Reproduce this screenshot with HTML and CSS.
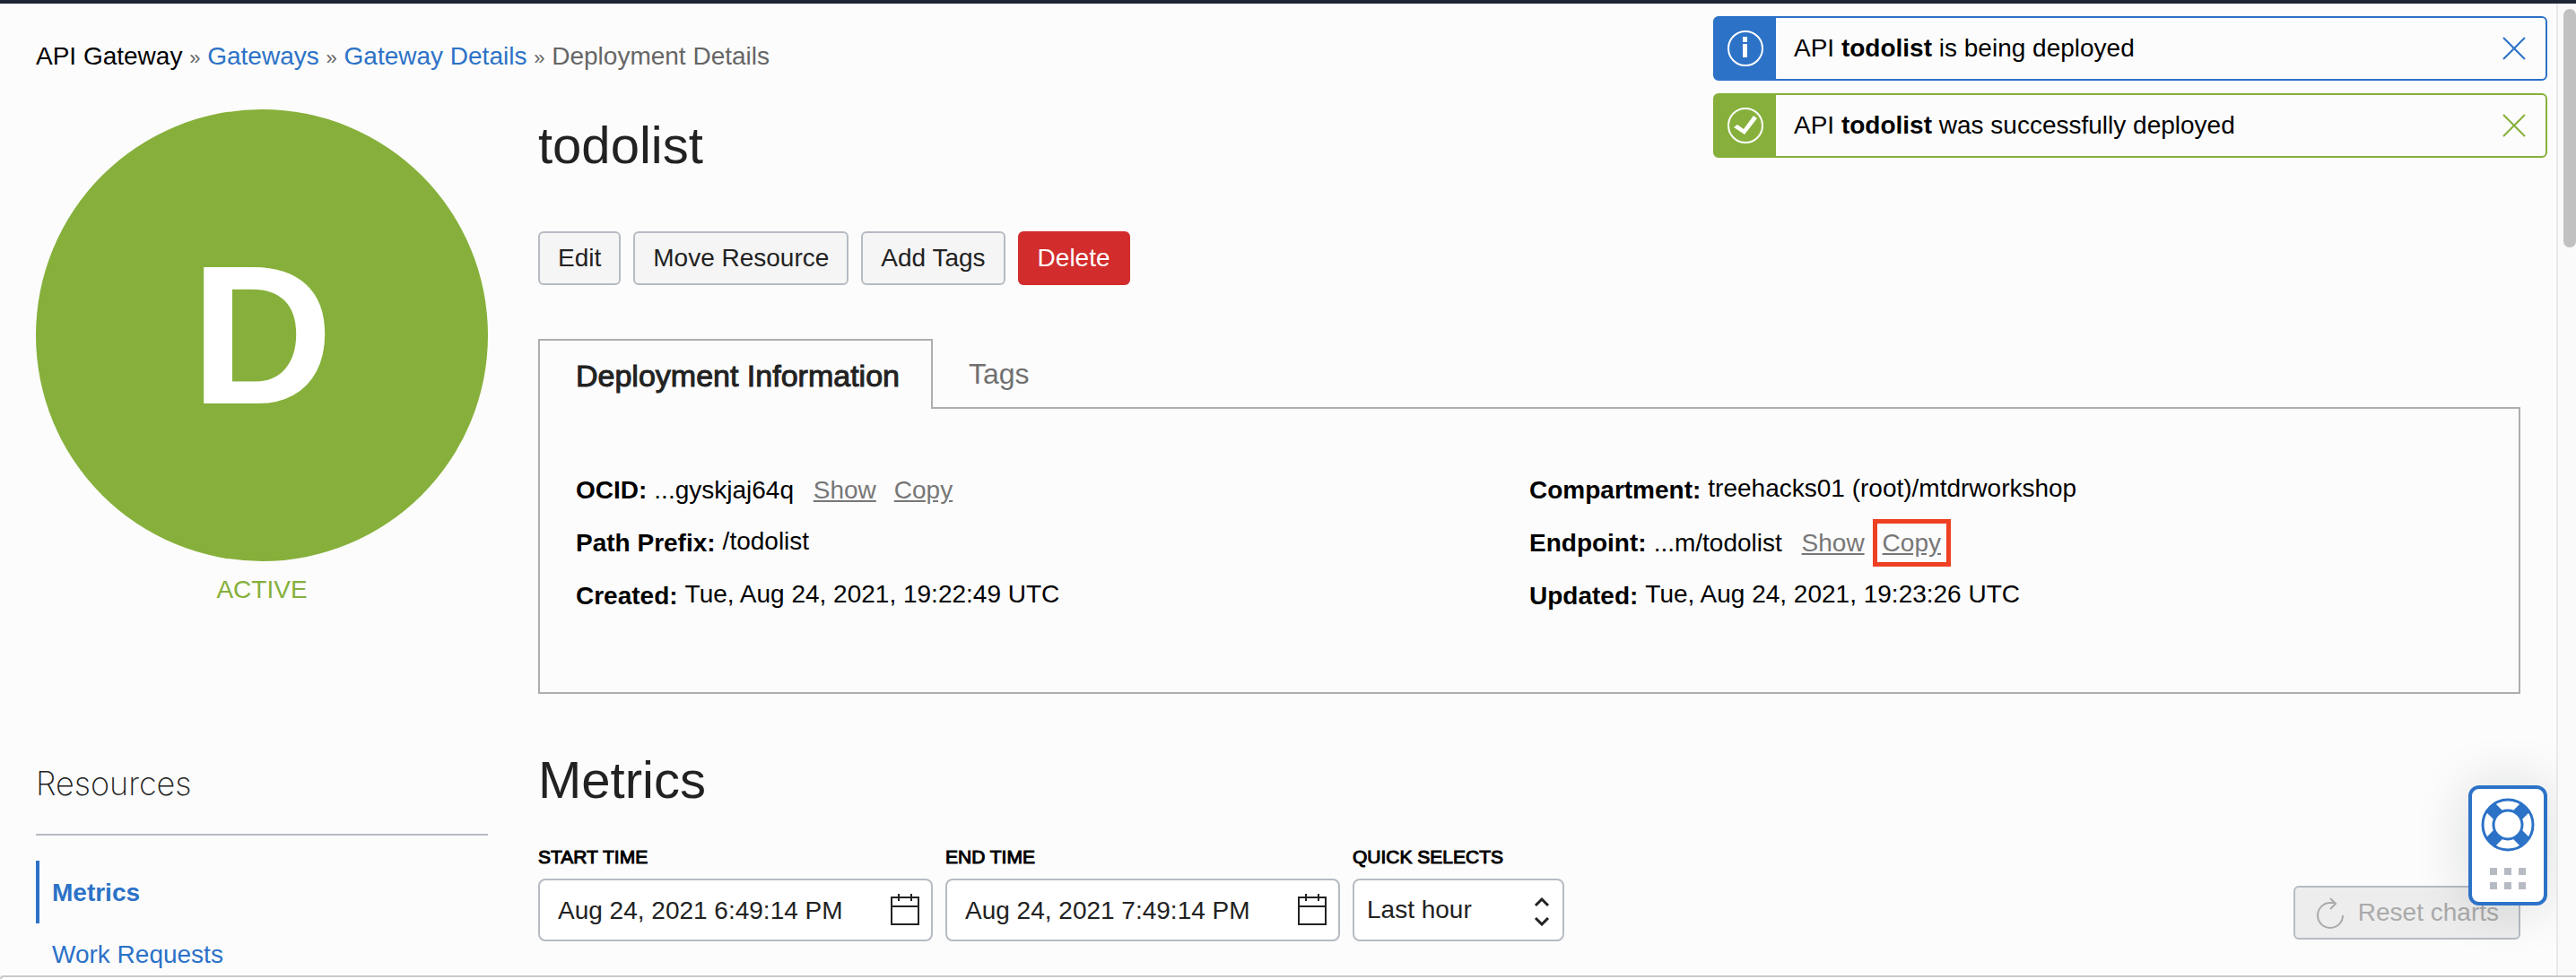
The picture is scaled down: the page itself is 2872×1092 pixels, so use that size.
FILE: index.html
```html
<!DOCTYPE html>
<html lang="en">
<head>
<meta charset="utf-8">
<title>Deployment Details</title>
<link rel="stylesheet" href="styles.css">
</head>
<body>
<div class="shell">
  <div class="topbar"></div>
  <div class="viewport">
    <main class="page">
      <nav class="breadcrumb" aria-label="Breadcrumb">
        <span class="crumb-root">API Gateway</span> <span class="sep">»</span> <a href="#gateways">Gateways</a> <span class="sep">»</span> <a href="#gateway">Gateway Details</a> <span class="sep">»</span> <span>Deployment Details</span>
      </nav>

      <div class="columns">
        <aside class="status">
          <div class="status-disc">D</div>
          <p class="status-text">ACTIVE</p>
        </aside>
        <section class="details">
          <h1 class="title">todolist</h1>
          <div class="actions">
            <button class="btn" type="button">Edit</button>
            <button class="btn" type="button">Move Resource</button>
            <button class="btn" type="button">Add Tags</button>
            <button class="btn btn-danger" type="button">Delete</button>
          </div>
          <div class="tabs" role="tablist">
            <button class="tab tab-active" type="button" role="tab" aria-selected="true">Deployment Information</button>
            <button class="tab" type="button" role="tab" aria-selected="false">Tags</button>
          </div>
          <div class="panel" role="tabpanel">
            <dl class="facts">
              <div class="fact fact-links"><dt>OCID:</dt><dd>...gyskjaj64q <a href="#show">Show</a><a href="#copy">Copy</a></dd></div>
              <div class="fact"><dt>Path Prefix:</dt><dd>/todolist</dd></div>
              <div class="fact"><dt>Created:</dt><dd>Tue, Aug 24, 2021, 19:22:49 UTC</dd></div>
            </dl>
            <dl class="facts">
              <div class="fact"><dt>Compartment:</dt><dd>treehacks01 (root)/mtdrworkshop</dd></div>
              <div class="fact fact-links"><dt>Endpoint:</dt><dd>...m/todolist <a href="#show">Show</a><a class="marked" href="#copy">Copy</a></dd></div>
              <div class="fact"><dt>Updated:</dt><dd>Tue, Aug 24, 2021, 19:23:26 UTC</dd></div>
            </dl>
          </div>
        </section>
      </div>

      <div class="columns">
        <aside class="resources">
          <h2 class="resources-title">Resources</h2>
          <ul class="resource-list">
            <li><a class="resource resource-active" href="#metrics">Metrics</a></li>
            <li><a class="resource" href="#work">Work Requests</a></li>
          </ul>
        </aside>
        <section class="metrics">
          <h2 class="title">Metrics</h2>
          <div class="filters">
            <div class="field">
              <label for="start">START TIME</label>
              <div class="control">
                <input id="start" type="text" value="Aug 24, 2021 6:49:14 PM">
                <svg class="calendar" viewBox="0 0 34 36" aria-hidden="true"><path d="M2 4h30v30H2zM2 14h30M10 0v8M24 0v8"/></svg>
              </div>
            </div>
            <div class="field">
              <label for="end">END TIME</label>
              <div class="control">
                <input id="end" type="text" value="Aug 24, 2021 7:49:14 PM">
                <svg class="calendar" viewBox="0 0 34 36" aria-hidden="true"><path d="M2 4h30v30H2zM2 14h30M10 0v8M24 0v8"/></svg>
              </div>
            </div>
            <div class="field field-select">
              <label for="quick">QUICK SELECTS</label>
              <div class="control">
                <select id="quick"><option>Last hour</option></select>
                <svg class="chevrons" viewBox="0 0 18 36" aria-hidden="true"><path d="M2 13l7-7 7 7M2 27l7 7 7-7"/></svg>
              </div>
            </div>
            <button class="btn btn-reset" type="button" disabled>
              <svg class="reload" viewBox="0 0 34 42" aria-hidden="true"><path d="M31 24A14 14 0 1 1 17 10H22M17 5l6 6-6 6"/></svg>
              Reset charts
            </button>
          </div>
        </section>
      </div>

      <div class="alerts">
        <div class="alert alert-info" role="status">
          <span class="alert-icon"><svg viewBox="0 0 40 40" aria-hidden="true"><circle cx="20" cy="20" r="19"/><path class="solid" d="M17 7h5v6h-5zM17 15h5v15h-5z"/></svg></span>
          <p>API <b>todolist</b> is being deployed</p>
          <button class="close" type="button" aria-label="Dismiss"><svg viewBox="0 0 26 26" aria-hidden="true"><path d="M1 1l24 24M25 1L1 25"/></svg></button>
        </div>
        <div class="alert alert-success" role="status">
          <span class="alert-icon"><svg viewBox="0 0 40 40" aria-hidden="true"><circle cx="20" cy="20" r="19"/><path class="solid" d="M7 22l4-3 7 5L29 9l4 3-14 18z"/></svg></span>
          <p>API <b>todolist</b> was successfully deployed</p>
          <button class="close" type="button" aria-label="Dismiss"><svg viewBox="0 0 26 26" aria-hidden="true"><path d="M1 1l24 24M25 1L1 25"/></svg></button>
        </div>
      </div>

      <button class="help" type="button" aria-label="Help">
        <svg class="ring" viewBox="0 0 60 60" aria-hidden="true">
          <path class="spokes" d="M11 11L24 24M49 11L36 24M11 49L24 36M49 49L36 36"/>
          <circle cx="30" cy="30" r="28"/><circle class="hole" cx="30" cy="30" r="16"/>
        </svg>
        <svg class="grip" viewBox="0 0 40 24" aria-hidden="true"><path d="M0 0h8v8H0zM16 0h8v8h-8zM32 0h8v8h-8zM0 16h8v8H0zM16 16h8v8h-8zM32 16h8v8h-8z"/></svg>
      </button>
    </main>
    <div class="track"><div class="thumb"></div></div>
  </div>
  <footer class="footer"></footer>
</div>
</body>
</html>
```

FILE: styles.css
```css
* { box-sizing: border-box; }
body, h1, h2, p, dl, dd, ul { margin: 0; padding: 0; }
body {
  background: #fcfcfc;
  color: #000;
  font: 28px/36px "Liberation Sans", Arial, sans-serif;
}
button, input, select { font: inherit; color: #222; }
a { color: #2c72c7; text-decoration: none; }
svg { display: block; flex: none; fill: none; stroke: currentColor; stroke-width: 2; }

.shell { display: flex; flex-direction: column; height: 100vh; overflow: hidden; }
.topbar { flex: none; height: 4px; background: #1e2534; }
.viewport { display: flex; flex: 1; min-height: 0; }
.page { position: relative; flex: 1; min-width: 0; padding: 41px 40px 0; overflow: hidden; border-right: 2px solid #e8e8e8; }
.track { width: 20px; padding-top: 6px; background: #fafafa; }
.thumb { width: 14px; height: 266px; margin-left: 6px; border-radius: 8px; background: #c1c1c1; }
.footer { flex: none; height: 4px; border-top: 2px solid #c9c9c9; border-left: 2px solid #c9c9c9; border-radius: 8px 0 0 0; background: #fff; }

.breadcrumb { margin-bottom: 41px; color: #666; }
.crumb-root { color: #000; }
.sep { font-size: 22px; line-height: 28px; }

.columns { display: grid; grid-template-columns: 504px minmax(0, 1fr); column-gap: 56px; }

.status-disc { display: flex; align-items: center; justify-content: center; height: 504px; border-radius: 50%; background: #86b03b; color: #fff; font-size: 220px; font-weight: bold; }
.status-text { margin-top: 14px; text-align: center; color: #86b03b; }

.title { color: #222; font-size: 58px; line-height: 64px; font-weight: normal; }
.details .title { margin-top: 8px; }
.actions { display: flex; gap: 14px; margin: 64px 0 60px; }
.btn { height: 60px; padding: 0 20px; border: 2px solid #b6bbc3; border-radius: 6px; background: #f5f5f5; }
.btn-danger { border-color: #d22c2c; background: #d22c2c; color: #fff; }

.tabs { display: flex; margin-bottom: -2px; }
.tab { height: 78px; padding: 0 40px; border: 0; background: none; color: #707070; font-size: 32px; }
.tab-active { position: relative; width: 440px; padding-top: 2px; border: 2px solid #aeaeae; border-bottom: 0; background: #fcfcfc; color: #222; font-size: 34px; -webkit-text-stroke: 1px #222; text-align: left; white-space: nowrap; }
.panel { display: grid; grid-template-columns: 1fr 1fr; height: 320px; padding: 71px 40px 0; border: 2px solid #aeaeae; }
.facts { display: flex; flex-direction: column; gap: 21px; }
.fact { display: flex; gap: 8px; }
.fact dt { padding-top: 2px; font-weight: bold; }
.fact a { margin-left: 20px; color: #777; text-decoration: underline; }
.fact a:first-child { margin-left: 14px; }
.fact-links dd { padding-top: 2px; }
.marked { outline: 5px solid #ee4023; outline-offset: 6px; }

.resources-title { margin-top: 76px; padding-bottom: 32px; border-bottom: 2px solid #b6bbc3; color: #222; font: 200 36px/48px Inter, "Liberation Sans", sans-serif; }
.resource-list { margin-top: 28px; list-style: none; }
.resource { display: flex; align-items: center; height: 68px; padding: 2px 0 0 18px; }
.resource-active { height: 70px; padding-left: 14px; border-left: 4px solid #2c72c7; font-weight: bold; }

.metrics .title { margin-top: 64px; }
.filters { display: flex; align-items: flex-end; gap: 14px; margin-top: 40px; }
.field { width: 440px; }
.field-select { width: 236px; }
.field label { display: block; margin-bottom: 10px; font-size: 21px; line-height: 28px; -webkit-text-stroke: 1px #000; }
.control { display: flex; align-items: center; height: 70px; padding: 0 12px 0 20px; border: 2px solid #b6bbc3; border-radius: 8px; background: #fff; color: #222; }
.control input, .control select { flex: 1; min-width: 0; height: 40px; padding: 0; border: 0; background: none; appearance: none; }
.control input { padding-top: 2px; }
.field-select .control { padding: 0 14px; }
.calendar { width: 34px; height: 36px; }
.chevrons { width: 18px; height: 36px; stroke-width: 3; }
.btn-reset { display: flex; align-items: center; gap: 14px; margin: 0 0 2px auto; padding: 0 22px; background: #ededed; color: #aaa; }
.reload { width: 34px; height: 42px; }

.alerts { position: absolute; top: 14px; right: 10px; display: grid; gap: 14px; width: 930px; }
.alert { display: flex; align-items: center; height: 72px; border: 2px solid; border-radius: 6px; background: #fcfcfc; }
.alert-info { border-color: #2c72c7; color: #2c72c7; }
.alert-success { border-color: #86b03b; color: #86b03b; }
.alert p { flex: 1; padding-left: 20px; color: #000; }
.alert-icon { display: grid; place-items: center; width: 68px; height: 68px; background: currentColor; }
.alert-icon svg { width: 40px; height: 40px; stroke: #fff; }
.alert-icon .solid { fill: #fff; stroke: none; }
.close { padding: 0; margin-right: 22px; border: 0; background: none; color: inherit; }
.close svg { width: 26px; height: 26px; }

.help { position: absolute; right: 10px; bottom: 78px; display: flex; flex-direction: column; align-items: center; gap: 18px; width: 88px; height: 134px; padding: 10px 0 0; border: 4px solid #2c72c7; border-radius: 12px; background: #fff; color: #2c72c7; box-shadow: 0 0 60px rgba(0, 20, 20, 0.14); }
.ring { width: 60px; height: 60px; stroke-width: 3; }
.ring .spokes { stroke-width: 14; }
.ring .hole { fill: #fff; }
.grip { width: 40px; height: 24px; fill: #b6bbc3; stroke: none; }
```
